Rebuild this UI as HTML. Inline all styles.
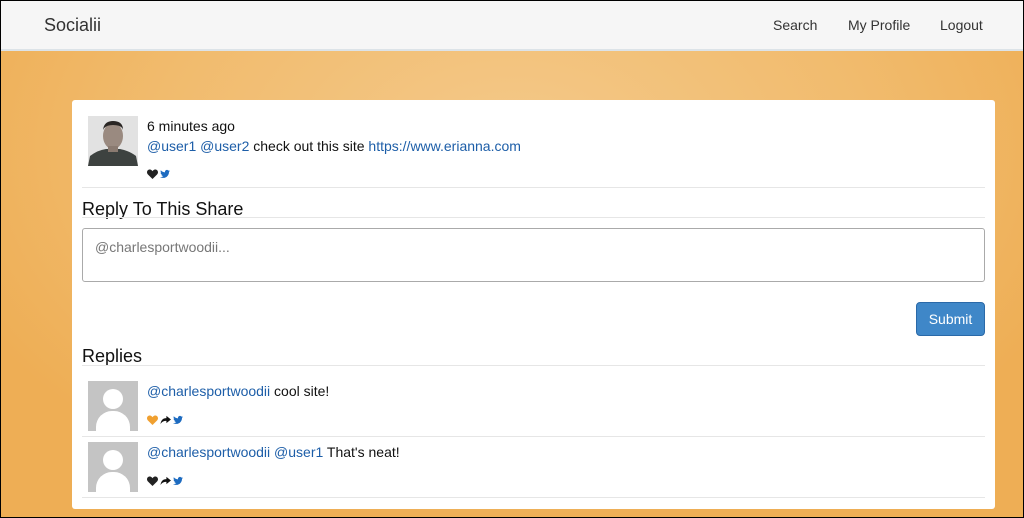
<!DOCTYPE html>
<html><head><meta charset="utf-8"><style>
*{box-sizing:border-box;margin:0;padding:0}
html,body{width:1024px;height:518px;overflow:hidden}
body{font-family:"Liberation Sans",Arial,sans-serif;font-size:14px;color:#111;position:relative;
background:radial-gradient(ellipse 600px 380px at 512px 150px,#f4c98a 0%,#f1bb6d 60%,#eeae55 100%);border:1px solid #000}
.nav{position:absolute;left:0;top:0;width:1022px;height:50px;background:#f6f6f6;border-bottom:2px solid #dce3e8}
.brand{position:absolute;left:43px;top:14px;font-size:18px;color:#333}
.nav a{position:absolute;top:16px;font-size:14px;color:#333;text-decoration:none}
.card{position:absolute;left:71px;top:99px;width:923px;height:409px;background:#fff;border-radius:3px}
.av{position:absolute;width:50px;height:50px}
.ph{background:#e4e4e4;overflow:hidden}
.gen{background:#c4c4c4;overflow:hidden}
.gen:before{content:"";position:absolute;left:15px;top:8px;width:20px;height:20px;border-radius:50%;background:#fff}
.gen:after{content:"";position:absolute;left:8px;top:30px;width:34px;height:26px;border-radius:16px 16px 0 0;background:#fff}
.t{position:absolute;font-size:14px;white-space:nowrap}
.l{color:#1d5ea8}
.hr{position:absolute;left:10px;width:903px;height:1px;background:#e6e6e6}
h3{position:absolute;font-weight:normal;font-size:18px;color:#111}
.ta{position:absolute;left:10px;top:128px;width:903px;height:54px;border:1px solid #aaa;border-radius:3px;padding:10px 12px;color:#777;font-size:14px}
.btn{position:absolute;left:844px;top:202px;width:69px;height:34px;background:#3f87c8;border:1px solid #2a69a8;border-radius:4px;color:#fff;font-size:14px;text-align:center;line-height:32px}
.ic{position:absolute;height:11px}
.ic svg{width:11px;height:10px;margin-right:2px;vertical-align:top}
</style></head><body>
<div class="nav"><span class="brand">Socialii</span>
<a style="left:772px">Search</a><a style="left:847px">My Profile</a><a style="left:939px">Logout</a></div>
<svg width="0" height="0" style="position:absolute"><defs>
<symbol id="h" viewBox="0 0 12 11"><path d="M6 11L1 6C-1 4 0 0.5 3 0.5C4.5 0.5 5.5 1.5 6 2.5C6.5 1.5 7.5 0.5 9 0.5C12 0.5 13 4 11 6Z"/></symbol>
<symbol id="s" viewBox="0 0 12 11"><path d="M7 1L12 5L7 9V6.5C4 6.5 2 7.5 0.5 10C1 6 3 3.5 7 3.5Z"/></symbol>
<symbol id="b" viewBox="0 0 12 10"><path d="M12 1.2c-.4.2-.9.3-1.4.4.5-.3.9-.8 1-1.3-.5.3-1 .5-1.5.6C9.6.3 9 0 8.3 0 7 0 5.9 1.1 5.9 2.4c0 .2 0 .4.1.6C4 2.9 2.2 2 1 .5.8.9.7 1.3.7 1.7c0 .8.4 1.6 1.1 2-.4 0-.8-.1-1.1-.3 0 1.2.8 2.2 2 2.4-.4.1-.8.1-1.1 0 .3 1 1.2 1.7 2.3 1.7C2.8 8.3 1.4 8.8 0 8.6 1.1 9.3 2.4 9.7 3.8 9.7c4.5 0 7-3.8 7-7v-.3c.5-.3.9-.8 1.2-1.2z"/></symbol>
</defs></svg>
<div class="card">
<div class="av ph" style="left:16px;top:16px">
<svg width="50" height="50" viewBox="0 0 50 50"><rect width="50" height="50" fill="#e2e2e2"/><path d="M0 50L2 40Q10 34 18 33L32 33Q42 35 48 40L50 50Z" fill="#3d4240"/><ellipse cx="25" cy="20" rx="10" ry="13" fill="#9a8a80"/><path d="M15 14Q16 5 25 5Q35 5 35 14Q34 9 25 9Q17 9 15 14Z" fill="#2a2624"/><rect x="20" y="30" width="10" height="6" fill="#8a7a70"/></svg></div>
<div class="t" style="left:75px;top:18px">6 minutes ago</div>
<div class="t" style="left:75px;top:38px"><span class="l">@user1 @user2</span> check out this site <span class="l">https://www.erianna.com</span></div>
<div class="ic" style="left:75px;top:69px"><svg fill="#222"><use href="#h"/></svg><svg fill="#1d6bc0" style="width:10px"><use href="#b"/></svg></div>
<div class="hr" style="top:87px"></div>
<h3 style="left:10px;top:99px">Reply To This Share</h3>
<div class="hr" style="top:117px"></div>
<div class="ta">@charlesportwoodii...</div>
<div class="btn">Submit</div>
<h3 style="left:10px;top:246px">Replies</h3>
<div class="hr" style="top:265px"></div>
<div class="av gen" style="left:16px;top:281px"></div>
<div class="t" style="left:75px;top:283px"><span class="l">@charlesportwoodii</span> cool site!</div>
<div class="ic" style="left:75px;top:315px"><svg fill="#f0a030"><use href="#h"/></svg><svg fill="#111"><use href="#s"/></svg><svg fill="#1d6bc0" style="width:10px"><use href="#b"/></svg></div>
<div class="hr" style="top:336px"></div>
<div class="av gen" style="left:16px;top:342px"></div>
<div class="t" style="left:75px;top:344px"><span class="l">@charlesportwoodii @user1</span> That's neat!</div>
<div class="ic" style="left:75px;top:376px"><svg fill="#222"><use href="#h"/></svg><svg fill="#111"><use href="#s"/></svg><svg fill="#1d6bc0" style="width:10px"><use href="#b"/></svg></div>
<div class="hr" style="top:397px"></div>
</div>
</body></html>
